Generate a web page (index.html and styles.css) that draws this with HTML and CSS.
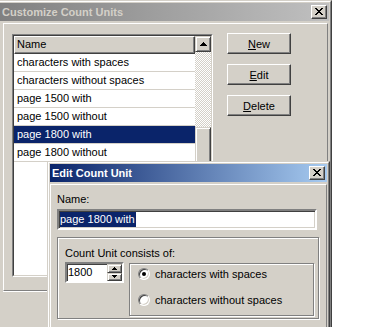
FILE: index.html
```html
<!DOCTYPE html>
<html lang="en">
<head>
    <meta charset="UTF-8" />
    <title>Customize Count Units</title>
    <link rel="stylesheet" href="styles.css">
</head>
<body>
<div class="desk">

    <!-- Main dialog (inactive, behind) -->
    <div class="win main-win">
        <div class="win-frame">
            <div class="caption inactive">
                <span class="caption-text">Customize Count Units</span>
                <span class="cap-btn">
                    <svg width="8" height="7" viewBox="0 0 8 7" shape-rendering="crispEdges"><path d="M0 0h2v1H0zM6 0h2v1H6zM1 1h2v1H1zM5 1h2v1H5zM2 2h4v1H2zM3 3h2v1H3zM2 4h4v1H2zM1 5h2v1H1zM5 5h2v1H5zM0 6h2v1H0zM6 6h2v1H6z"/></svg>
                </span>
            </div>
            <div class="panel main-panel">
                <div class="listview">
                    <div class="lv-frame">
                        <div class="lv-body">
                            <div class="lv-head">Name</div>
                            <div class="lv-row">characters with spaces</div>
                            <div class="lv-row">characters without spaces</div>
                            <div class="lv-row">page 1500 with</div>
                            <div class="lv-row">page 1500 without</div>
                            <div class="lv-row selected">page 1800 with</div>
                            <div class="lv-row">page 1800 without</div>
                        </div>
                        <div class="vscroll">
                            <div class="sb-btn">
                                <svg width="7" height="4" viewBox="0 0 7 4" shape-rendering="crispEdges"><path d="M3 0h1v1H3zM2 1h3v1H2zM1 2h5v1H1zM0 3h7v1H0z"/></svg>
                            </div>
                            <div class="sb-track"></div>
                            <div class="sb-thumb"></div>
                            <div class="sb-track rest"></div>
                        </div>
                    </div>
                </div>
                <div class="side-btns">
                    <button class="btn"><u>N</u>ew</button>
                    <button class="btn"><u>E</u>dit</button>
                    <button class="btn"><u>D</u>elete</button>
                </div>
            </div>
        </div>
    </div>

    <!-- Edit dialog (active, on top) -->
    <div class="win edit-win">
        <div class="win-frame">
            <div class="caption active">
                <span class="caption-text">Edit Count Unit</span>
                <span class="cap-btn">
                    <svg width="8" height="7" viewBox="0 0 8 7" shape-rendering="crispEdges"><path d="M0 0h2v1H0zM6 0h2v1H6zM1 1h2v1H1zM5 1h2v1H5zM2 2h4v1H2zM3 3h2v1H3zM2 4h4v1H2zM1 5h2v1H1zM5 5h2v1H5zM0 6h2v1H0zM6 6h2v1H6z"/></svg>
                </span>
            </div>
            <div class="panel edit-panel">
                <div class="field-label">Name:</div>
                <div class="textbox"><span class="sel">page 1800 with</span></div>
                <div class="frame">
                    <div class="field-label">Count Unit consists of:</div>
                    <div class="unit-row">
                        <div class="spin">
                            <span class="spin-val">1800</span>
                            <div class="spin-btns">
                                <span class="spin-btn">
                                    <svg width="5" height="3" viewBox="0 0 5 3" shape-rendering="crispEdges"><path d="M2 0h1v1H2zM1 1h3v1H1zM0 2h5v1H0z"/></svg>
                                </span>
                                <span class="spin-btn">
                                    <svg width="5" height="3" viewBox="0 0 5 3" shape-rendering="crispEdges"><path d="M0 0h5v1H0zM1 1h3v1H1zM2 2h1v1H2z"/></svg>
                                </span>
                            </div>
                        </div>
                        <div class="radio-box">
                            <label class="radio-item"><span class="radio checked"><span class="dot"></span></span>characters with spaces</label>
                            <label class="radio-item"><span class="radio"></span>characters without spaces</label>
                        </div>
                    </div>
                </div>
            </div>
        </div>
    </div>

</div>
</body>
</html>
```

FILE: styles.css
```css
/* Windows classic palette */
:root {
    --face: #d4d0c8;
    --light: #ffffff;
    --shadow: #808080;
    --dark: #404040;
    --select: #0a246a;
}

* {
    box-sizing: border-box;
}

body {
    margin: 0;
    background: #fff;
    font-family: "Liberation Sans", Arial, sans-serif;
    font-size: 11px;
    color: #000;
    overflow: hidden;
}

/* the screen the windows sit on */
.desk {
    position: relative;
    width: 375px;
    height: 327px;
    overflow: hidden;
}

/* Window chrome */
.win {
    position: absolute;
    background: var(--face);
    border: 1px solid;
    border-color: var(--face) var(--dark) var(--dark) var(--face);
}

.main-win {
    left: -3px;
    top: 0;
    width: 335px;
    height: 400px;
}

.edit-win {
    left: 47px;
    top: 161px;
    width: 283px;
    height: 200px;
}

.win-frame {
    height: 100%;
    padding: 1px;
    border: 1px solid;
    border-color: var(--light) var(--shadow) var(--shadow) var(--light);
    display: flex;
    flex-direction: column;
}

.caption {
    height: 18px;
    flex: none;
    display: flex;
    align-items: center;
    justify-content: space-between;
    padding: 0 2px;
    font-weight: bold;
}

.caption.inactive {
    background: linear-gradient(to right, #808080, #c0c0c0);
    color: var(--face);
}

.caption.active {
    background: linear-gradient(to right, #0a246a, #a6caf0);
    color: #fff;
}

.cap-btn {
    width: 16px;
    height: 14px;
    background: var(--face);
    border: 1px solid;
    border-color: var(--light) var(--dark) var(--dark) var(--light);
    box-shadow: inset -1px -1px var(--shadow);
    display: flex;
    align-items: center;
    justify-content: center;
    padding-bottom: 1px;
}

/* raised client panel */
.panel {
    margin-top: 2px;
    border: 1px solid;
    border-color: var(--light) var(--shadow) var(--shadow) var(--light);
}

.main-panel {
    margin-left: 3px;
    margin-right: 1px;
    height: 268px;
    display: flex;
    align-items: flex-start;
    padding: 10px 0 0 8px;
    box-shadow: 0 1px 0 var(--light);
}

/* List view */
.listview {
    width: 201px;
    height: 243px;
    border: 1px solid;
    border-color: var(--shadow) var(--light) var(--light) var(--shadow);
}

.lv-frame {
    height: 100%;
    border: 1px solid;
    border-color: var(--dark) var(--face) var(--face) var(--dark);
    background: #fff;
    display: flex;
    overflow: hidden;
}

.lv-body {
    flex: 1;
}

.lv-head {
    height: 18px;
    padding-left: 2px;
    line-height: 15px;
    background: var(--face);
    border: 1px solid;
    border-color: var(--light) var(--dark) var(--dark) var(--light);
    box-shadow: inset -1px -1px var(--shadow);
}

.lv-row {
    height: 18px;
    padding-left: 3px;
    line-height: 17px;
    border-bottom: 1px solid var(--face);
    white-space: nowrap;
}

.lv-row.selected {
    background: var(--select);
    color: #fff;
}

.vscroll {
    width: 16px;
    display: flex;
    flex-direction: column;
}

.sb-btn,
.sb-thumb {
    background: var(--face);
    border: 1px solid;
    border-color: var(--face) var(--dark) var(--dark) var(--face);
    box-shadow: inset 1px 1px var(--light), inset -1px -1px var(--shadow);
}

.sb-btn {
    height: 16px;
    display: flex;
    align-items: center;
    justify-content: center;
}

.sb-track {
    height: 75px;
    background: repeating-conic-gradient(#fff 0 25%, var(--face) 0 50%) 0 0 / 2px 2px;
}

.sb-track.rest {
    flex: 1;
}

.sb-thumb {
    height: 120px;
}

/* Push buttons */
.side-btns {
    margin: -1px 0 0 14px;
    display: flex;
    flex-direction: column;
    gap: 10px;
}

.btn {
    width: 64px;
    height: 21px;
    padding: 0;
    font: inherit;
    color: #000;
    background: var(--face);
    border: 1px solid;
    border-color: var(--light) var(--dark) var(--dark) var(--light);
    box-shadow: inset -1px -1px var(--shadow);
}

/* Edit dialog contents */
.edit-panel {
    flex: 1;
    padding: 8px 0 0 6px;
}

.field-label {
    line-height: 13px;
}

.textbox {
    width: 260px;
    height: 21px;
    margin-top: 3px;
    padding: 0 1px;
    background: #fff;
    border: 2px solid;
    border-color: var(--shadow) var(--light) var(--light) var(--shadow);
    box-shadow: inset 1px 1px var(--dark), inset -1px -1px var(--face);
    display: flex;
    align-items: center;
}

.sel {
    background: var(--select);
    color: #fff;
    line-height: 15px;
    padding: 0 1px 0 0;
}

.frame {
    width: 262px;
    height: 82px;
    margin-top: 7px;
    padding: 9px 0 0 7px;
    border: 1px solid var(--shadow);
    box-shadow: inset 1px 1px var(--light), 1px 1px 0 var(--light);
}

.unit-row {
    display: flex;
    align-items: flex-start;
    margin-top: 2px;
}

.spin {
    width: 59px;
    height: 21px;
    background: #fff;
    border: 2px solid;
    border-color: var(--shadow) var(--light) var(--light) var(--shadow);
    box-shadow: inset 1px 1px var(--dark);
    display: flex;
}

.spin-val {
    flex: 1;
    line-height: 16px;
    padding-left: 1px;
}

.spin-btns {
    width: 15px;
    display: flex;
    flex-direction: column;
}

.spin-btn {
    flex: 1;
    background: var(--face);
    border: 1px solid;
    border-color: var(--face) var(--dark) var(--dark) var(--face);
    box-shadow: inset 1px 1px var(--light), inset -1px -1px var(--shadow);
    display: flex;
    align-items: center;
    justify-content: center;
}

.radio-box {
    width: 185px;
    height: 53px;
    margin: 1px 0 0 5px;
    padding: 4px 0 0 8px;
    border: 1px solid var(--shadow);
    box-shadow: inset 1px 1px var(--light), 1px 1px 0 var(--light);
    display: flex;
    flex-direction: column;
    gap: 14px;
}

.radio-item {
    display: flex;
    align-items: center;
    gap: 5px;
    height: 12px;
    white-space: nowrap;
}

.radio {
    width: 12px;
    height: 12px;
    flex: none;
    border-radius: 50%;
    background: #fff;
    border: 1px solid;
    border-color: var(--shadow) var(--light) var(--light) var(--shadow);
    box-shadow: inset 1px 1px var(--dark), inset -1px -1px var(--face);
    display: flex;
    align-items: center;
    justify-content: center;
}

.dot {
    width: 4px;
    height: 4px;
    border-radius: 50%;
    background: #000;
}
```
